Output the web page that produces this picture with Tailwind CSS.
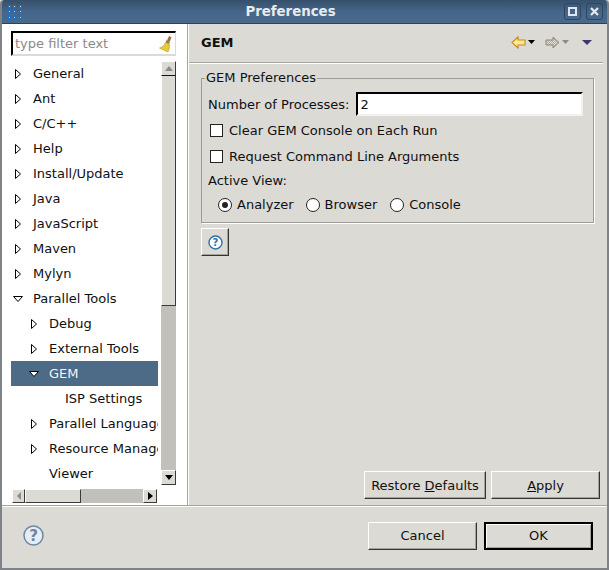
<!DOCTYPE html>
<html lang="en">
<head>
<meta charset="UTF-8">
<title>Preferences</title>
<script src="https://cdn.jsdelivr.net/npm/@tailwindcss/browser@4"></script>
</head>
<body class="bg-[#dcdad5]">
<div class="w-[609px] h-[570px] flex flex-col overflow-hidden bg-[#dcdad5] font-['DejaVu_Sans',sans-serif] text-[13px] leading-[17px] text-[#101010] border-x-2 border-b-2 border-x-[#7f8286] border-b-[#7f8286] rounded-t-[4px]">

  <!-- Title bar -->
  <div class="h-[24px] -mx-[2px] shrink-0 flex items-center bg-gradient-to-b from-[#36506b] via-[#45658a] to-[#4a6a8c] border-b border-[#2e4258] rounded-t-[4px]">
    <svg class="ml-[8px] w-[14px] h-[14px]" viewBox="0 0 14 14" fill="#1b6fc4">
      <rect x="0" y="0" width="3" height="3"/><rect x="5" y="0" width="3" height="3"/><rect x="11" y="0" width="3" height="3"/>
      <rect x="0" y="5" width="3" height="3"/><rect x="5" y="5" width="3" height="3"/><rect x="11" y="5" width="3" height="3"/>
      <rect x="0" y="11" width="3" height="3"/><rect x="5" y="11" width="3" height="3"/><rect x="11" y="11" width="3" height="3"/>
      <g fill="#bcdcf5">
        <rect x="1" y="1" width="1" height="1"/><rect x="6" y="1" width="1" height="1"/><rect x="12" y="1" width="1" height="1"/>
        <rect x="1" y="6" width="1" height="1"/><rect x="6" y="6" width="1" height="1"/><rect x="12" y="6" width="1" height="1"/>
        <rect x="1" y="12" width="1" height="1"/><rect x="6" y="12" width="1" height="1"/><rect x="12" y="12" width="1" height="1"/>
      </g>
    </svg>
    <div class="flex-1 text-center font-bold text-[#e6ebf0] text-[13.33px] pr-[5px]">Preferences</div>
    <div class="flex gap-[5px] mr-[6px]">
      <div class="w-[17px] h-[17px] rounded-[3px] border border-[#2f4560] flex items-center justify-center">
        <div class="w-[9px] h-[9px] border-2 border-[#dfe6ee]"></div>
      </div>
      <div class="w-[17px] h-[17px] rounded-[3px] border border-[#2f4560] flex items-center justify-center">
        <svg class="w-[9px] h-[9px]" viewBox="0 0 9 9"><path d="M1 1L8 8M8 1L1 8" stroke="#e4eaf0" stroke-width="2.2"/></svg>
      </div>
    </div>
  </div>

  <!-- Main -->
  <div class="h-[481px] shrink-0 flex">
    <!-- Left panel -->
    <div class="w-[186px] bg-white pl-[9px] pr-[11px] border-r border-[#a5a39e] shrink-0">
      <div class="mt-[7px] h-[25px] w-[165px] flex items-center justify-between border-t-2 border-l-2 border-t-black border-l-black border-r border-b-2 border-r-[#dcdad5] border-b-[#dcdad5] pl-[2px] pr-[1px]">
        <span class="text-[#8a8a8a]">type filter text</span>
        <svg class="w-[15px] h-[18px]" viewBox="0 0 15 18">
          <path d="M10 1L12.5 2.5L10.5 7L8 5.5Z" fill="#a0703a"/>
          <path d="M7.5 5L11 7L10 9L6.5 7.5Z" fill="#8a8458"/>
          <path d="M6.5 7.5L10.5 9.5C10.5 13 10 15 9 17L0.5 13C3 12.5 5.5 10.5 6.5 7.5Z" fill="#e8c93c" stroke="#b59a28" stroke-width="0.6"/>
        </svg>
      </div>

      <div class="mt-[5px] flex w-[165px] items-start">
        <div class="w-[147px] shrink-0">
          <div class="h-[425px] overflow-hidden whitespace-nowrap">
            <div class="h-[25px] flex items-center"><svg class="ml-[4px] w-[6px] h-[10px] shrink-0" viewBox="0 0 6 10"><path d="M.5 .5L5.5 5L.5 9.5Z" fill="white" stroke="black"/></svg><span class="ml-[12px]">General</span></div>
            <div class="h-[25px] flex items-center"><svg class="ml-[4px] w-[6px] h-[10px] shrink-0" viewBox="0 0 6 10"><path d="M.5 .5L5.5 5L.5 9.5Z" fill="white" stroke="black"/></svg><span class="ml-[12px]">Ant</span></div>
            <div class="h-[25px] flex items-center"><svg class="ml-[4px] w-[6px] h-[10px] shrink-0" viewBox="0 0 6 10"><path d="M.5 .5L5.5 5L.5 9.5Z" fill="white" stroke="black"/></svg><span class="ml-[12px]">C/C++</span></div>
            <div class="h-[25px] flex items-center"><svg class="ml-[4px] w-[6px] h-[10px] shrink-0" viewBox="0 0 6 10"><path d="M.5 .5L5.5 5L.5 9.5Z" fill="white" stroke="black"/></svg><span class="ml-[12px]">Help</span></div>
            <div class="h-[25px] flex items-center"><svg class="ml-[4px] w-[6px] h-[10px] shrink-0" viewBox="0 0 6 10"><path d="M.5 .5L5.5 5L.5 9.5Z" fill="white" stroke="black"/></svg><span class="ml-[12px]">Install/Update</span></div>
            <div class="h-[25px] flex items-center"><svg class="ml-[4px] w-[6px] h-[10px] shrink-0" viewBox="0 0 6 10"><path d="M.5 .5L5.5 5L.5 9.5Z" fill="white" stroke="black"/></svg><span class="ml-[12px]">Java</span></div>
            <div class="h-[25px] flex items-center"><svg class="ml-[4px] w-[6px] h-[10px] shrink-0" viewBox="0 0 6 10"><path d="M.5 .5L5.5 5L.5 9.5Z" fill="white" stroke="black"/></svg><span class="ml-[12px]">JavaScript</span></div>
            <div class="h-[25px] flex items-center"><svg class="ml-[4px] w-[6px] h-[10px] shrink-0" viewBox="0 0 6 10"><path d="M.5 .5L5.5 5L.5 9.5Z" fill="white" stroke="black"/></svg><span class="ml-[12px]">Maven</span></div>
            <div class="h-[25px] flex items-center"><svg class="ml-[4px] w-[6px] h-[10px] shrink-0" viewBox="0 0 6 10"><path d="M.5 .5L5.5 5L.5 9.5Z" fill="white" stroke="black"/></svg><span class="ml-[12px]">Mylyn</span></div>
            <div class="h-[25px] flex items-center"><svg class="ml-[2px] w-[10px] h-[6px] shrink-0" viewBox="0 0 10 6"><path d="M.5 .5H9.5L5 5.5Z" fill="white" stroke="black"/></svg><span class="ml-[10px]">Parallel Tools</span></div>
            <div class="h-[25px] flex items-center"><svg class="ml-[20px] w-[6px] h-[10px] shrink-0" viewBox="0 0 6 10"><path d="M.5 .5L5.5 5L.5 9.5Z" fill="white" stroke="black"/></svg><span class="ml-[12px]">Debug</span></div>
            <div class="h-[25px] flex items-center"><svg class="ml-[20px] w-[6px] h-[10px] shrink-0" viewBox="0 0 6 10"><path d="M.5 .5L5.5 5L.5 9.5Z" fill="white" stroke="black"/></svg><span class="ml-[12px]">External Tools</span></div>
            <div class="h-[25px] flex items-center bg-[#4d6a86] text-[#f2f4f6]"><svg class="ml-[18px] w-[10px] h-[6px] shrink-0" viewBox="0 0 10 6"><path d="M.5 .5H9.5L5 5.5Z" fill="white" stroke="black"/></svg><span class="ml-[10px]">GEM</span></div>
            <div class="h-[25px] flex items-center"><span class="ml-[54px]">ISP Settings</span></div>
            <div class="h-[25px] flex items-center"><svg class="ml-[20px] w-[6px] h-[10px] shrink-0" viewBox="0 0 6 10"><path d="M.5 .5L5.5 5L.5 9.5Z" fill="white" stroke="black"/></svg><span class="ml-[12px]">Parallel Language Development Tools</span></div>
            <div class="h-[25px] flex items-center"><svg class="ml-[20px] w-[6px] h-[10px] shrink-0" viewBox="0 0 6 10"><path d="M.5 .5L5.5 5L.5 9.5Z" fill="white" stroke="black"/></svg><span class="ml-[12px]">Resource Managers</span></div>
            <div class="h-[25px] flex items-center"><span class="ml-[38px]">Viewer</span></div>
          </div>
          <!-- Horizontal scrollbar -->
          <div class="mt-[3px] ml-[1px] h-[14px] w-[145px] flex bg-[#c2c0ba]">
            <div class="w-[13px] flex items-center justify-center bg-[#dcdad5] border-r border-b border-r-[#3a3a3a] border-b-[#3a3a3a] border-t border-l border-t-white border-l-white">
              <svg class="w-[5px] h-[8px]" viewBox="0 0 5 8"><path d="M5 0V8L1 4Z" fill="#8a8a86"/></svg>
            </div>
            <div class="w-[56px] bg-[#dcdad5] border-r border-b border-r-[#3a3a3a] border-b-[#3a3a3a] border-t border-l border-t-white border-l-white"></div>
            <div class="flex-1"></div>
            <div class="w-[14px] flex items-center justify-center bg-[#dcdad5] border-r border-b border-r-[#3a3a3a] border-b-[#3a3a3a] border-t border-l border-t-white border-l-white">
              <svg class="w-[5px] h-[8px]" viewBox="0 0 5 8"><path d="M0 0V8L5 4Z" fill="black"/></svg>
            </div>
          </div>
        </div>
        <!-- Vertical scrollbar -->
        <div class="ml-[3px] w-[15px] h-[424px] flex flex-col bg-[#c2c0ba]">
          <div class="h-[15px] flex items-center justify-center bg-[#dcdad5] border-r border-b border-r-[#3a3a3a] border-b-[#111] border-t border-l border-t-white border-l-white">
            <svg class="w-[8px] h-[5px]" viewBox="0 0 8 5"><path d="M0 5H8L4 0Z" fill="#8a8a86"/></svg>
          </div>
          <div class="h-[230px] bg-[#dcdad5] border-r border-b border-r-[#3a3a3a] border-b-[#3a3a3a] border-l border-l-white"></div>
          <div class="flex-1"></div>
          <div class="h-[15px] flex items-center justify-center bg-[#dcdad5] border-r border-b border-r-[#3a3a3a] border-b-[#3a3a3a] border-t border-l border-t-white border-l-white">
            <svg class="w-[8px] h-[5px]" viewBox="0 0 8 5"><path d="M0 0H8L4 5Z" fill="black"/></svg>
          </div>
        </div>
      </div>
    </div>

    <!-- Right panel -->
    <div class="flex-1 flex flex-col min-w-0 border-l border-white">
      <div class="h-[38px] shrink-0 flex items-center pl-[12px] pr-[15px] pb-[2px]">
        <span class="font-bold">GEM</span>
        <div class="ml-auto flex items-center">
          <svg class="w-[15px] h-[13px]" viewBox="0 0 15 13"><path d="M7 1L1 6.5L7 12V9H14V4H7Z" fill="#fde9a0" stroke="#c98a12" stroke-width="1.1"/></svg>
          <svg class="ml-[2px] w-[7px] h-[4px]" viewBox="0 0 7 4"><path d="M0 0H7L3.5 4Z" fill="black"/></svg>
          <svg class="ml-[10px] w-[15px] h-[13px]" viewBox="0 0 15 13">
            <defs><pattern id="hatch" width="2" height="2" patternUnits="userSpaceOnUse"><rect width="2" height="2" fill="#e8e6e0"/><rect width="1" height="1" fill="#a5a39c"/><rect x="1" y="1" width="1" height="1" fill="#a5a39c"/></pattern></defs>
            <path d="M8 1L14 6.5L8 12V9H1V4H8Z" fill="url(#hatch)" stroke="#8f8775" stroke-width="1"/>
          </svg>
          <svg class="ml-[2px] w-[7px] h-[4px]" viewBox="0 0 7 4"><path d="M0 0H7L3.5 4Z" fill="#8a8a86"/></svg>
          <svg class="ml-[13px] w-[10px] h-[5px]" viewBox="0 0 10 5"><path d="M0 0H10L5 5Z" fill="#3d3670"/></svg>
        </div>
      </div>
      <div class="h-[2px] mr-[4px] shrink-0 border-t border-b border-t-[#a5a39e] border-b-white"></div>

      <div class="flex-1 flex flex-col pl-[12px] pr-[7px]">
        <fieldset class="mt-[6px] w-[393px] h-[153px] border border-[#9d9b96] shadow-[1px_1px_0_white] px-[6px]">
          <legend class="ml-[-3px] pl-[1px] pr-[1px] -translate-y-[1px]">GEM Preferences</legend>
          <div class="flex items-center h-[24px] mt-[5px]">
            <label class="whitespace-nowrap">Number of Processes:</label>
            <input type="text" value="2" class="ml-[7px] w-[227px] h-[24px] bg-white border-t-2 border-l-2 border-t-black border-l-black border-r-2 border-b-2 border-r-[#f2f1ee] border-b-[#f2f1ee] pl-[2px] outline-none">
          </div>
          <div class="flex items-center h-[17px] mt-[6px] ml-[2px]">
            <span class="w-[13px] h-[13px] bg-white border border-[#222] shrink-0"></span><span class="ml-[6px]">Clear GEM Console on Each Run</span>
          </div>
          <div class="flex items-center h-[17px] mt-[9px] ml-[2px]">
            <span class="w-[13px] h-[13px] bg-white border border-[#222] shrink-0"></span><span class="ml-[6px]">Request Command Line Arguments</span>
          </div>
          <div class="h-[17px] mt-[7px]">Active View:</div>
          <div class="flex items-center h-[17px] mt-[7px] ml-[10px]">
            <span class="w-[14px] h-[14px] rounded-full bg-white border border-[#222] flex items-center justify-center shrink-0"><span class="w-[6px] h-[6px] rounded-full bg-[#222]"></span></span><span class="ml-[5px]">Analyzer</span>
            <span class="ml-[12px] w-[14px] h-[14px] rounded-full bg-white border border-[#222] shrink-0"></span><span class="ml-[5px]">Browser</span>
            <span class="ml-[13px] w-[14px] h-[14px] rounded-full bg-white border border-[#222] shrink-0"></span><span class="ml-[5px]">Console</span>
          </div>
        </fieldset>

        <button class="mt-[5px] w-[28px] h-[28px] flex items-center justify-center bg-[#dcdad5] border-t border-l border-t-white border-l-white border-r border-b border-r-[#333] border-b-[#333] shadow-[inset_-1px_-1px_0_#a5a39e]">
          <svg class="w-[15px] h-[15px]" viewBox="0 0 15 15">
            <circle cx="7.5" cy="7.5" r="6.5" fill="white" stroke="#2f6fa8" stroke-width="1.4"/>
            <text x="7.5" y="11.2" text-anchor="middle" font-size="10" font-weight="700" fill="#2f6fa8" font-family="DejaVu Sans">?</text>
          </svg>
        </button>

        <div class="mt-auto mb-[6px] flex justify-end gap-[5px]">
          <button class="w-[122px] h-[28px] bg-[#dcdad5] border-t border-l border-t-white border-l-white border-r border-b border-r-[#333] border-b-[#333] shadow-[inset_-1px_-1px_0_#a5a39e]">Restore <span class="underline">D</span>efaults</button>
          <button class="w-[109px] h-[28px] bg-[#dcdad5] border-t border-l border-t-white border-l-white border-r border-b border-r-[#333] border-b-[#333] shadow-[inset_-1px_-1px_0_#a5a39e]"><span class="underline">A</span>pply</button>
        </div>
      </div>
    </div>
  </div>

  <!-- Bottom bar -->
  <div class="flex-1 border-t border-[#a5a39e] shadow-[inset_0_1px_0_white] flex items-center pl-[21px] pr-[14px] pb-[3px]">
    <svg class="w-[21px] h-[21px]" viewBox="0 0 21 21">
      <circle cx="10.5" cy="10.5" r="9.5" fill="#e9ecf0" stroke="#6c87a6" stroke-width="1.5"/>
      <text x="10.5" y="16" text-anchor="middle" font-size="15" font-weight="700" fill="#6c87a6" font-family="DejaVu Sans">?</text>
    </svg>
    <button class="ml-auto w-[109px] h-[28px] bg-[#dcdad5] border-t border-l border-t-white border-l-white border-r border-b border-r-[#333] border-b-[#333] shadow-[inset_-1px_-1px_0_#a5a39e]">Cancel</button>
    <button class="ml-[7px] w-[109px] h-[28px] bg-[#dcdad5] border-2 border-black shadow-[inset_1px_1px_0_white,inset_-1px_-1px_0_#a5a39e]">OK</button>
  </div>
</div>
</body>
</html>
